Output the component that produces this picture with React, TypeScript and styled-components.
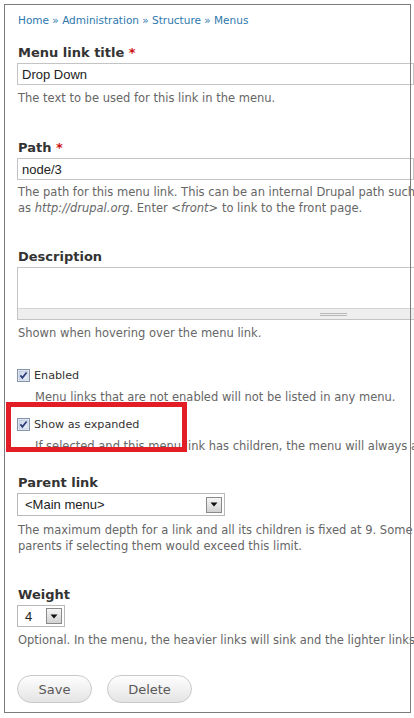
import React from "react";
import styled, { createGlobalStyle } from "styled-components";

const GlobalStyle = createGlobalStyle`
  html, body {
    margin: 0;
    padding: 0;
    background: #ffffff;
    overflow: hidden;
  }
  body {
    font-family: "DejaVu Sans", Verdana, sans-serif;
  }
`;

const Frame = styled.div`
  position: relative;
  box-sizing: border-box;
  margin: 4px 0 0 4px;
  width: 407px;
  height: 709px;
  padding: 9px 0 0 13px;
  &::after {
    content: "";
    position: absolute;
    inset: 0;
    border: 1px solid #7c7c7c;
    pointer-events: none;
  }
`;

const Breadcrumb = styled.nav`
  font-size: 10.5px;
  line-height: 14px;
  color: #2d78ad;
  white-space: nowrap;
  margin-left: 1px;
`;

const Crumb = styled.a`
  color: #2d78ad;
  text-decoration: none;
`;

const Field = styled.div<{ $gap: number }>`
  position: relative;
  margin-top: ${(p) => p.$gap}px;
`;

const Label = styled.label`
  display: block;
  font-size: 13px;
  font-weight: bold;
  line-height: 16px;
  color: #333333;
  margin: 0 0 2px 1px;
  white-space: nowrap;
`;

const Required = styled.span`
  color: #cc1111;
`;

const TextInput = styled.div<{ $h: number }>`
  box-sizing: border-box;
  width: 397px;
  height: ${(p) => p.$h}px;
  border: 1px solid #c4c4c4;
  background: #ffffff;
  font-family: "Liberation Sans", Arial, sans-serif;
  font-size: 13px;
  color: #222222;
  display: flex;
  align-items: center;
  padding-left: 4px;
`;

const Description = styled.div<{ $top: number; $indent?: number }>`
  margin-top: ${(p) => p.$top}px;
  margin-left: ${(p) => (p.$indent ?? 0) + 1}px;
  font-size: 11.5px;
  line-height: 16px;
  color: #666666;
  white-space: nowrap;
`;

const TextArea = styled.div`
  box-sizing: border-box;
  width: 632px;
  height: 53px;
  border: 1px solid #c4c4c4;
  display: flex;
  flex-direction: column;
  background: #ffffff;
`;

const AreaBody = styled.div`
  flex: 1;
`;

const Grippie = styled.div`
  height: 10px;
  background: #eeeeee;
  border-top: 1px solid #d4d4d4;
  display: flex;
  justify-content: center;
  align-items: center;
`;

const GrippieLines = styled.span`
  width: 27px;
  height: 3px;
  border-top: 1px solid #b8b8b8;
  border-bottom: 1px solid #b8b8b8;
  box-sizing: content-box;
  height: 1px;
  margin-left: 0px;
`;

const CheckRow = styled.div`
  display: flex;
  align-items: center;
  gap: 4px;
  height: 16px;
  font-size: 11.2px;
  color: #333333;
  white-space: nowrap;
`;

const Annotation = styled.div`
  position: absolute;
  left: -11px;
  top: -14px;
  width: 181px;
  height: 50px;
  box-sizing: border-box;
  border: 5px solid #e21d26;
  pointer-events: none;
`;

const SelectBox = styled.div<{ $w: number; $h: number }>`
  box-sizing: border-box;
  width: ${(p) => p.$w}px;
  height: ${(p) => p.$h}px;
  border: 1px solid #b9b9b9;
  background: #ffffff;
  display: flex;
  align-items: center;
  justify-content: space-between;
  padding: 0 2px 0 7px;
  font-family: "Liberation Sans", Arial, sans-serif;
  font-size: 13px;
  color: #222222;
`;

const SelectArrow = styled.span`
  box-sizing: border-box;
  width: 16px;
  height: 16px;
  border: 1px solid #8a8a8a;
  background: linear-gradient(#f6f6f6, #d2d2d2);
  display: flex;
  align-items: center;
  justify-content: center;
`;

const Actions = styled.div`
  display: flex;
  gap: 15px;
  margin-top: 27px;
`;

const Button = styled.button<{ $w: number }>`
  box-sizing: border-box;
  width: ${(p) => p.$w}px;
  height: 28px;
  border: 1px solid #c9c9c9;
  border-radius: 14px;
  background: linear-gradient(#fefefe, #e4e4e4);
  font-family: "DejaVu Sans", Verdana, sans-serif;
  font-size: 13px;
  color: #595959;
  padding: 0;
  margin: 0;
`;

const Checkbox = () => (
  <svg width="13" height="13" viewBox="0 0 13 13">
    <defs>
      <linearGradient id="cbg" x1="0" y1="0" x2="1" y2="1">
        <stop offset="0" stopColor="#c9d4e6" />
        <stop offset="1" stopColor="#eef2f9" />
      </linearGradient>
    </defs>
    <rect x="0.5" y="0.5" width="12" height="12" fill="#f4f6fa" stroke="#8594ab" />
    <rect x="2" y="2" width="9" height="9" fill="url(#cbg)" stroke="#a9b8d0" strokeWidth="0.6" />
    <path d="M3.4 6.4 L5.4 8.8 L9.6 3.4" fill="none" stroke="#2b3b78" strokeWidth="1.7" />
  </svg>
);

const DownTriangle = () => (
  <svg width="8" height="5" viewBox="0 0 8 5">
    <path d="M0.5 0.5 H7.5 L4 4.5 Z" fill="#111111" />
  </svg>
);

export default function App() {
  return (
    <>
      <GlobalStyle />
      <Frame>
        <Breadcrumb>
          <Crumb>Home</Crumb> » <Crumb>Administration</Crumb> » <Crumb>Structure</Crumb> »{" "}
          <Crumb>Menus</Crumb>
        </Breadcrumb>

        <Field $gap={18}>
          <Label>
            Menu link title <Required>*</Required>
          </Label>
          <TextInput $h={22}>Drop Down</TextInput>
          <Description $top={5}>The text to be used for this link in the menu.</Description>
        </Field>

        <Field $gap={34}>
          <Label>
            Path <Required>*</Required>
          </Label>
          <TextInput $h={22}>node/3</TextInput>
          <Description $top={4}>
            The path for this menu link. This can be an internal Drupal path such
            <br />
            as <i>http://drupal.org</i>. Enter <i>&lt;front&gt;</i> to link to the front page.
          </Description>
        </Field>

        <Field $gap={33}>
          <Label>Description</Label>
          <TextArea>
            <AreaBody />
            <Grippie>
              <GrippieLines />
            </Grippie>
          </TextArea>
          <Description $top={5}>Shown when hovering over the menu link.</Description>
        </Field>

        <Field $gap={26}>
          <CheckRow>
            <Checkbox />
            Enabled
          </CheckRow>
          <Description $top={6} $indent={17}>
            Menu links that are not enabled will not be listed in any menu.
          </Description>
        </Field>

        <Field $gap={11}>
          <CheckRow>
            <Checkbox />
            Show as expanded
          </CheckRow>
          <Description $top={6} $indent={17}>
            If selected and this menu link has children, the menu will always appear expanded.
          </Description>
          <Annotation />
        </Field>

        <Field $gap={21}>
          <Label>Parent link</Label>
          <SelectBox $w={208} $h={23}>
            &lt;Main menu&gt;
            <SelectArrow>
              <DownTriangle />
            </SelectArrow>
          </SelectBox>
          <Description $top={6}>
            The maximum depth for a link and all its children is fixed at 9. Some menu links may not be available as
            <br />
            parents if selecting them would exceed this limit.
          </Description>
        </Field>

        <Field $gap={33}>
          <Label>Weight</Label>
          <SelectBox $w={48} $h={22}>
            4
            <SelectArrow>
              <DownTriangle />
            </SelectArrow>
          </SelectBox>
          <Description $top={5}>
            Optional. In the menu, the heavier links will sink and the lighter links will be positioned nearer the top.
          </Description>
        </Field>

        <Actions>
          <Button $w={75}>Save</Button>
          <Button $w={85}>Delete</Button>
        </Actions>
      </Frame>
    </>
  );
}
